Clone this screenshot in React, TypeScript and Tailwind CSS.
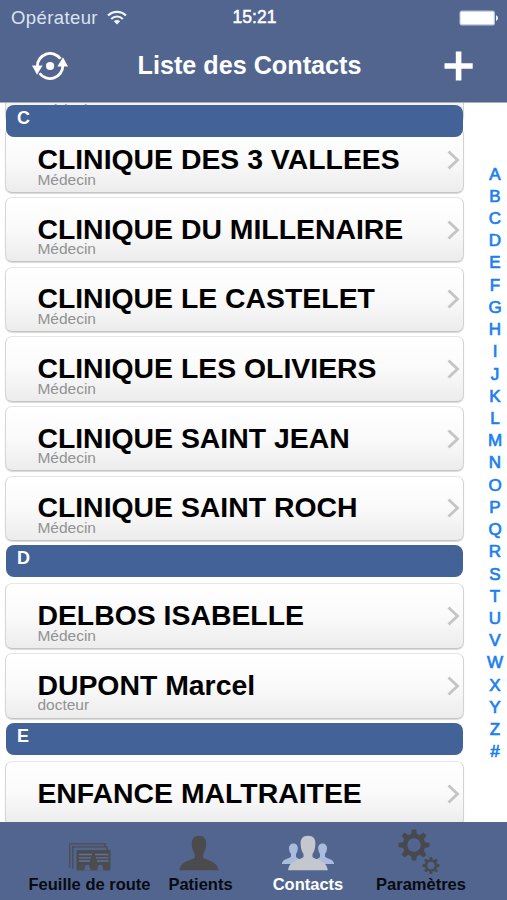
import clsx from 'clsx';

const SECTIONS = [
  {
    letter: 'C',
    contacts: [
      { name: 'CLINIQUE DES 3 VALLEES', role: 'Médecin' },
      { name: 'CLINIQUE DU MILLENAIRE', role: 'Médecin' },
      { name: 'CLINIQUE LE CASTELET', role: 'Médecin' },
      { name: 'CLINIQUE LES OLIVIERS', role: 'Médecin' },
      { name: 'CLINIQUE SAINT JEAN', role: 'Médecin' },
      { name: 'CLINIQUE SAINT ROCH', role: 'Médecin' },
    ],
  },
  {
    letter: 'D',
    contacts: [
      { name: 'DELBOS ISABELLE', role: 'Médecin' },
      { name: 'DUPONT Marcel', role: 'docteur' },
    ],
  },
  {
    letter: 'E',
    contacts: [{ name: 'ENFANCE MALTRAITEE', role: '' }],
  },
];

const INDEX = 'ABCDEFGHIJKLMNOPQRSTUVWXYZ#'.split('');

const WifiIcon = () => (
  <svg width="20" height="16" viewBox="0 0 20 16" fill="none" stroke="#f0f4fb" strokeWidth="2.1">
    <path d="M1 5.6C6 0.6 14 0.6 19 5.6" />
    <path d="M4.2 8.9C7.4 5.7 12.6 5.7 15.8 8.9" />
    <path d="M10 14.6L6.8 11.3C8.6 9.6 11.4 9.6 13.2 11.3Z" fill="#f0f4fb" stroke="none" />
  </svg>
);

const BatteryIcon = () => (
  <svg width="40" height="16" viewBox="0 0 40 16">
    <rect x="0.5" y="0.5" width="35.5" height="15" rx="2.5" fill="#b9c4db" />
    <rect x="1.5" y="1.8" width="33.3" height="12.4" rx="1" fill="#fff" />
    <path d="M37 5.2C39.6 5.8 39.6 10.2 37 10.8Z" fill="#f0f4fb" />
  </svg>
);

const RefreshIcon = () => (
  <svg width="36" height="30" viewBox="0 0 36 30">
    <g fill="none" stroke="#fff" strokeWidth="2.8">
      <path d="M5.3 15.5A12.8 12.8 0 0 1 28.5 7.8" />
      <path d="M30.8 14.5A12.8 12.8 0 0 1 7.6 22.2" />
    </g>
    <path d="M31 6.3L36 15.4L25.4 15.4Z" fill="#fff" />
    <path d="M5 23.7L0 14.6L10.6 14.6Z" fill="#fff" />
    <circle cx="18.1" cy="15" r="4.1" fill="#fff" />
  </svg>
);

const PlusIcon = () => (
  <svg width="29" height="30" viewBox="0 0 29 30">
    <path d="M11.8 0.5h5.6v11.7h11.3v5.6h-11.3v11.7h-5.6v-11.7h-11.3v-5.6h11.3z" fill="#fff" />
  </svg>
);

const Chevron = () => (
  <svg width="13" height="20" viewBox="0 0 13 20" fill="none">
    <path d="M1.5 1.5L10.5 10L1.5 18.5" stroke="#c5c5c7" strokeWidth="2.9" />
  </svg>
);

const SheetsIcon = () => (
  <svg width="42" height="28" viewBox="0 0 42 28">
    <g fill="none" stroke="#4b4c50" strokeWidth="1.3">
      <path d="M0.8 25V0.8H36V4" />
      <path d="M3.8 26V3.8H38V7" />
    </g>
    <rect x="7.5" y="7" width="34" height="20.5" fill="#4b4c50" />
    <path d="M10 11.5H23M26 11.5H39.5M10 14.8H22M27 14.8H39.5M10 18H21M28 18H39.5" stroke="#60709a" strokeWidth="1.3" />
    <path d="M15 27.5L16.5 22H20L21.5 27.5ZM28 27.5L29.5 22H33L34.5 27.5Z" fill="#53658e" />
  </svg>
);

const PersonIcon = () => (
  <svg width="40" height="36" viewBox="0 0 40 36">
    <path
      d="M20 0.8C25 0.8 27.4 4 27.2 9C27 13.5 25.6 17 24.2 19V22.5C26 25 38.8 26 39.5 35.2H0.5C1.2 26 14 25 15.8 22.5V19C14.4 17 13 13.5 12.8 9C12.6 4 15 0.8 20 0.8Z"
      fill="#4b4b4e"
    />
  </svg>
);

const GroupIcon = () => (
  <svg width="54" height="36" viewBox="0 0 54 36">
    <g fill="#a9bbdf">
      <path d="M12.5 8.5C15.5 8.5 17 10.5 16.8 13.5C16.6 16 15.8 18 15 19V22L19 25V29H0.8C1.5 23.5 8.5 24 10 21.5V19C9 18 8.2 16 8 13.5C7.8 10.5 9.5 8.5 12.5 8.5Z" />
      <path d="M41.5 8.5C38.5 8.5 37 10.5 37.2 13.5C37.4 16 38.2 18 39 19V22L35 25V29H53.2C52.5 23.5 45.5 24 44 21.5V19C45 18 45.8 16 46 13.5C46.2 10.5 44.5 8.5 41.5 8.5Z" />
    </g>
    <path
      d="M27 0.8C32.5 0.8 34.6 4 34.4 9C34.2 13.5 33 17 31.5 19V22C33.5 24.5 46 25 46.8 35.2H7.2C8 25 20.5 24.5 22.5 22V19C21 17 19.8 13.5 19.6 9C19.4 4 21.5 0.8 27 0.8Z"
      fill="#c4c7cd"
    />
  </svg>
);

const TEETH = [0, 45, 90, 135, 180, 225, 270, 315];

const Gear = () => (
  <g>
    <circle r="9" fill="none" stroke="#47494f" strokeWidth="4.6" />
    {TEETH.map((angle) => (
      <path key={angle} d="M-3.1 -10.5L-2.1 -15.5H2.1L3.1 -10.5Z" fill="#47494f" transform={`rotate(${angle})`} />
    ))}
  </g>
);

const GearsIcon = () => (
  <svg width="42" height="46" viewBox="0 0 42 46">
    <g transform="translate(16 16)">
      <Gear />
    </g>
    <g transform="translate(33 36.5) scale(0.55)">
      <Gear />
    </g>
  </svg>
);

const SectionHeader = ({ letter, className }: { letter: string; className?: string }) => (
  <div
    className={clsx(
      'h-8 rounded-lg bg-[#426298] pl-[11px] text-[18px] leading-[26px] font-bold text-white',
      className,
    )}
  >
    {letter}
  </div>
);

const ContactCard = ({ name, role }: { name: string; role: string }) => (
  <div className="mb-[4.17px] flex h-[65.5px] justify-between rounded-[7px] border border-t-[#e6e6e6] border-r-[#d2d2d2] border-b-[#c4c4c4] border-l-[#d6d6d6] bg-linear-to-b from-white via-[#fafafa] to-[#ececec] pr-[3px] pl-[31.4px] shadow-[0_1px_1px_rgba(0,0,0,0.15)]">
    <div className="pt-[14.8px] whitespace-nowrap">
      <div className="h-[32px] text-[28.4px] leading-[32px] font-bold text-black">{name}</div>
      <div className="-mt-[4.5px] text-[15.5px] leading-[18px] text-[#929292]">{role}</div>
    </div>
    <div className="flex items-center">
      <Chevron />
    </div>
  </div>
);

const TABS = [
  { label: 'Feuille de route', icon: <SheetsIcon />, width: 'w-[125px]', offset: 'mb-1' },
  { label: 'Patients', icon: <PersonIcon />, width: 'w-[97px]', offset: 'mb-1 -ml-1' },
  { label: 'Contacts', icon: <GroupIcon />, width: 'w-[118px]', offset: 'mb-1', active: true },
  { label: 'Paramètres', icon: <GearsIcon />, width: 'w-[108px]', offset: '-ml-1' },
];

export default function App() {
  return (
    <div className="flex h-[900px] w-[507px] flex-col overflow-hidden bg-white font-['Liberation_Sans',Arial,sans-serif]">
      {/* Status bar + navigation */}
      <header className="z-10 h-[102px] shrink-0 bg-[#52658f] text-white shadow-[0_1px_0_#a8adba]">
        <div className="grid h-[35px] grid-cols-3 items-center pr-[8px] pl-[11px]">
          <div className="flex items-center gap-[9px] text-[18.5px] tracking-[0.4px] text-[#dbe3f2]">
            Opérateur
            <WifiIcon />
          </div>
          <div className="pr-px text-center text-[17.5px] [-webkit-text-stroke:0.5px]">15:21</div>
          <div className="flex justify-end">
            <BatteryIcon />
          </div>
        </div>
        <div className="flex h-[62px] items-center pr-[34px] pl-8">
          <RefreshIcon />
          <h1 className="ml-[69.5px] text-[25.2px] font-bold whitespace-nowrap">Liste des Contacts</h1>
          <div className="ml-auto">
            <PlusIcon />
          </div>
        </div>
      </header>

      <main className="relative flex h-[720px] shrink-0 overflow-hidden">
        <div className="-mt-[44.4px] ml-[5px] w-[459px] shrink-0">
          {/* Scrolled half under the pinned header */}
          <ContactCard name="" role="Médecin" />
          {SECTIONS.map((section, i) => (
            <section key={section.letter}>
              {i > 0 && <SectionHeader letter={section.letter} className="mr-px mb-[6.2px] ml-px" />}
              {section.contacts.map((c) => (
                <ContactCard key={c.name} name={c.name} role={c.role} />
              ))}
            </section>
          ))}
        </div>
        <SectionHeader letter="C" className="absolute top-[3px] left-[6px] w-[457px]" />

        {/* Alphabet index */}
        <nav className="ml-auto flex w-[24px] flex-col items-center pt-[61.6px] text-[17px] text-[#1b7ff2] [-webkit-text-stroke:0.7px]">
          {INDEX.map((l) => (
            <span key={l} className="h-[22.23px] shrink-0 leading-[22px]">
              {l}
            </span>
          ))}
        </nav>
      </main>

      <footer className="flex h-[78px] shrink-0 bg-[#52658f] pl-[27px]">
        {TABS.map((t) => (
          <div key={t.label} className={clsx('flex flex-col items-center justify-end pb-[7px]', t.width)}>
            <div className={t.offset}>{t.icon}</div>
            <span
              className={clsx(
                'text-[16.5px] leading-[18px] font-bold whitespace-nowrap',
                t.active ? 'text-white' : 'text-[#080b12]',
              )}
            >
              {t.label}
            </span>
          </div>
        ))}
      </footer>
    </div>
  );
}
